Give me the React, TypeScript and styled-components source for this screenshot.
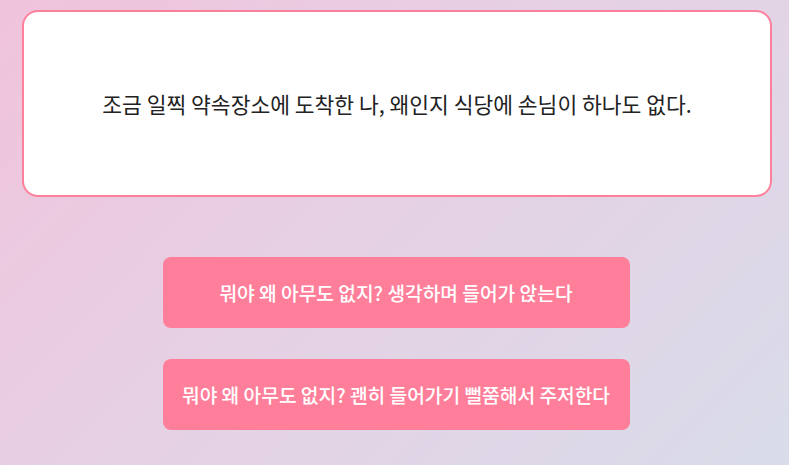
import React from "react";
import styled, { createGlobalStyle } from "styled-components";

const GlobalStyle = createGlobalStyle`
  html, body {
    margin: 0;
    padding: 0;
  }
  body {
    font-family: "Noto Sans CJK KR", "Noto Sans", sans-serif;
    background: linear-gradient(135deg, #f0c3dc 0%, #e6d0e4 45%, #d9dce9 100%);
    min-height: 465px;
  }
`;

const Page = styled.div`
  min-height: 465px;
  box-sizing: border-box;
  padding: 10px 17px 0 22px;
  display: flex;
  flex-direction: column;
  align-items: center;
`;

const StoryCard = styled.div`
  width: 100%;
  height: 187px;
  box-sizing: border-box;
  background: #ffffff;
  border: 2px solid #ff809b;
  border-radius: 16px;
  display: flex;
  align-items: center;
  justify-content: center;
`;

const StoryText = styled.p`
  margin: 0;
  font-size: 21.5px;
  color: #222222;
  text-align: center;
`;

const Choices = styled.div`
  margin-top: 60px;
  margin-right: 2px;
  display: flex;
  flex-direction: column;
  gap: 31px;
`;

const ChoiceButton = styled.button`
  width: 467px;
  height: 71px;
  border: none;
  border-radius: 8px;
  background: #ff7f9b;
  color: #ffffff;
  font-family: "Noto Sans CJK KR", "Noto Sans", sans-serif;
  font-size: 19.2px;
  font-weight: 500;
  cursor: pointer;
`;

const choices = [
  "뭐야 왜 아무도 없지? 생각하며 들어가 앉는다",
  "뭐야 왜 아무도 없지? 괜히 들어가기 뻘쭘해서 주저한다",
];

export default function App() {
  return (
    <>
      <GlobalStyle />
      <Page>
        <StoryCard>
          <StoryText>
            조금 일찍 약속장소에 도착한 나, 왜인지 식당에 손님이 하나도 없다.
          </StoryText>
        </StoryCard>
        <Choices>
          {choices.map((c) => (
            <ChoiceButton key={c}>{c}</ChoiceButton>
          ))}
        </Choices>
      </Page>
    </>
  );
}
